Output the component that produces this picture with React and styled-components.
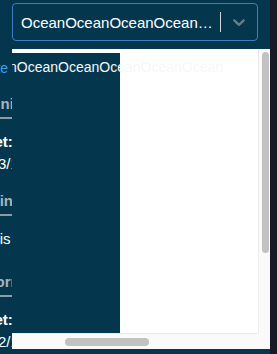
import React from 'react';
import styled, { createGlobalStyle } from 'styled-components';

const GlobalStyle = createGlobalStyle`
  html, body {
    margin: 0;
    padding: 0;
    background: #191a28;
    font-family: 'Liberation Sans', Arial, sans-serif;
  }
`;

const Screen = styled.div`
  width: 270px;
  height: 354px;
  background: #04374e;
  overflow: hidden;
  display: flex;
  flex-direction: column;
`;

const Header = styled.div`
  padding: 3px 12px 0 12px;
`;

const SelectWrap = styled.div`
  position: relative;
  width: 246px;
`;

const Control = styled.div`
  height: 38px;
  box-sizing: border-box;
  border: 1px solid #3b7fc2;
  border-radius: 4px;
  display: flex;
  align-items: stretch;
`;

const ValueBox = styled.div`
  flex: 1;
  min-width: 0;
  display: flex;
  align-items: center;
  padding: 0 6px 0 8px;
`;

const Value = styled.span`
  color: #ffffff;
  font-size: 15px;
  white-space: nowrap;
  overflow: hidden;
  text-overflow: ellipsis;
`;

const Separator = styled.span`
  width: 1px;
  margin: 8px 0;
  background: #cfd6da;
`;

const Indicator = styled.div`
  padding: 0 8px;
  display: flex;
  align-items: center;
  color: #6a7c88;
`;

const Menu = styled.div`
  position: absolute;
  top: calc(100% + 8px);
  left: 0;
  width: 258px;
  height: 300px;
  background: #ffffff;
  display: grid;
  grid-template-columns: 1fr 12px;
  grid-template-rows: 1fr 16px;
  z-index: 10;
`;

const Viewport = styled.div`
  overflow: hidden;
`;

const ScrollContent = styled.div`
  padding-top: 4px;
`;

const OptionBlock = styled.div`
  width: ${p => p.$width}px;
  height: 300px;
  background: #04374e;
  padding: 6px 0 0 36px;
  box-sizing: border-box;
`;

const OptionLabel = styled.div`
  color: #f6f8f9;
  font-size: 14px;
  line-height: 16px;
  white-space: nowrap;
`;

const VTrack = styled.div`
  background: #fafafa;
  border-left: 1px solid #ebebeb;
  padding: 3px 1px 0 3px;
`;

const HTrack = styled.div`
  background: #fafafa;
  border-top: 1px solid #ebebeb;
  padding-top: 4px;
`;

const Corner = styled.div`
  background: #fafafa;
`;

const Thumb = styled.div`
  background: #c2c2c2;
  border-radius: 4px;
  width: ${p => (p.$vertical ? '7px' : 'auto')};
  height: ${p => (p.$vertical ? '201px' : '8px')};
`;

const Content = styled.div`
  margin-left: -37px;
  padding-top: 17px;
  display: flex;
  flex-direction: column;
  gap: 16px;
  width: 300px;
`;

const LinkText = styled.a`
  color: #3aa0ee;
  font-size: 14px;
  line-height: 20px;
  white-space: nowrap;
`;

const Section = styled.section``;

const Heading = styled.h4`
  margin: 0;
  color: #a8b3ba;
  font-size: 15px;
  font-weight: 700;
  line-height: 20px;
  padding-bottom: 3px;
  border-bottom: 2px solid #8e9ba3;
  white-space: nowrap;
`;

const Body = styled.div`
  padding-top: 12px;
`;

const Label = styled.div`
  color: #ffffff;
  font-size: 15px;
  font-weight: 700;
  line-height: 22px;
  white-space: nowrap;
`;

const Text = styled.div`
  color: #ffffff;
  font-size: 15px;
  line-height: 22px;
  white-space: nowrap;
  margin-bottom: ${p => (p.$para ? '6px' : '0')};
`;

const Chevron = () => (
  <svg width="20" height="20" viewBox="0 0 20 20" fill="currentColor">
    <path d="M4.516 7.548c0.436-0.446 1.043-0.481 1.576 0l3.908 3.747 3.908-3.747c0.533-0.481 1.141-0.446 1.574 0 0.436 0.445 0.408 1.197 0 1.615-0.406 0.418-4.695 4.502-4.695 4.502-0.217 0.223-0.502 0.335-0.787 0.335s-0.57-0.112-0.789-0.335c0 0-4.287-4.084-4.695-4.502s-0.436-1.17 0-1.615z" />
  </svg>
);

const option = 'Ocean'.repeat(8);
const viewW = 246;
const contentW = 720;
const scrollLeft = 155;

export default function App() {
  const thumbW = (viewW * viewW) / contentW;
  const thumbLeft = (scrollLeft * viewW) / contentW;

  return (
    <>
      <GlobalStyle />
      <Screen>
        <Header>
          <SelectWrap>
            <Control>
              <ValueBox>
                <Value>{'Ocean'.repeat(6)}</Value>
              </ValueBox>
              <Separator />
              <Indicator>
                <Chevron />
              </Indicator>
            </Control>
            <Menu>
              <Viewport>
                <ScrollContent style={{ marginLeft: -scrollLeft }}>
                  <OptionBlock $width={120 - 12 + scrollLeft}>
                    <OptionLabel>{option}</OptionLabel>
                  </OptionBlock>
                </ScrollContent>
              </Viewport>
              <VTrack>
                <Thumb $vertical />
              </VTrack>
              <HTrack>
                <Thumb style={{ width: thumbW, marginLeft: thumbLeft }} />
              </HTrack>
              <Corner />
            </Menu>
          </SelectWrap>
        </Header>

        <Content>
          <LinkText>Update</LinkText>
          <Section>
            <Heading>Administrator</Heading>
            <Body>
              <Label>Target:</Label>
              <Text>Sun, 3/1/2024</Text>
            </Body>
          </Section>
          <Section>
            <Heading>Pending</Heading>
            <Body>
              <Text $para>Here is a short description</Text>
            </Body>
          </Section>
          <Section>
            <Heading>Platform</Heading>
            <Body>
              <Label>Target:</Label>
              <Text>Sun, 2/1/2024 • 10:00 AM</Text>
            </Body>
          </Section>
        </Content>
      </Screen>
    </>
  );
}
